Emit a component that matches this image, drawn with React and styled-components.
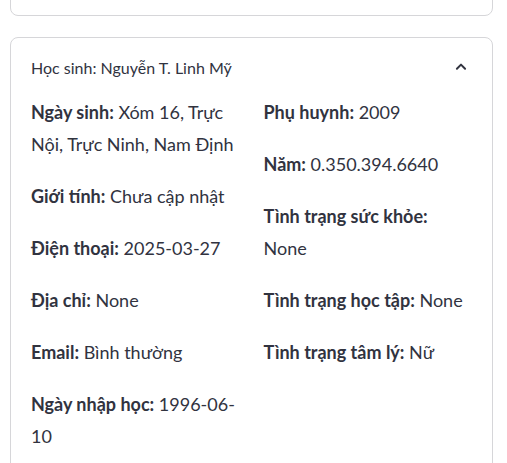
import React from 'react'
import styled, { createGlobalStyle } from 'styled-components'

const GlobalStyle = createGlobalStyle`
    body {
        margin: 0;
        background: #ffffff;
        font-family: "Lato", "Noto Sans", sans-serif;
        color: #31333f;
        overflow: hidden;
    }
`

const Page = styled.div`
    display: flex;
    flex-direction: column;
    gap: 21px;
    padding: 0 14px 0 10px;
    margin-top: -41px;
`

const Card = styled.div`
    border: 1px solid #d6d6d9;
    border-radius: 8px;
    background: #fff;
    flex-shrink: 0;
    height: ${props => props.height || 'auto'};
`

const Header = styled.div`
    height: 58px;
    display: flex;
    align-items: center;
    justify-content: space-between;
    padding: 0 24px 0 20px;
    font-size: 16px;
    color: #31333f;
`

const Body = styled.div`
    padding: 0 20px 20px 20px;
    display: grid;
    grid-template-columns: 1fr 1fr;
    column-gap: 24px;
`

const Column = styled.div`
    display: flex;
    flex-direction: column;
    gap: 20px;
`

const Item = styled.p`
    margin: 0;
    font-size: 18px;
    line-height: 32px;
    b {
        font-weight: 700;
    }
`

const left = [
    ['Ngày sinh', 'Xóm 16, Trực Nội, Trực Ninh, Nam Định'],
    ['Giới tính', 'Chưa cập nhật'],
    ['Điện thoại', '2025-03-27'],
    ['Địa chỉ', 'None'],
    ['Email', 'Bình thường'],
    ['Ngày nhập học', '1996-06-10'],
]

const right = [
    ['Phụ huynh', '2009'],
    ['Năm', '0.350.394.6640'],
    ['Tình trạng sức khỏe', 'None'],
    ['Tình trạng học tập', 'None'],
    ['Tình trạng tâm lý', 'Nữ'],
]

function App() {
    return (
        <>
            <GlobalStyle />
            <Page>
                <Card height="55px" />
                <Card>
                    <Header>
                        <span>Học sinh: Nguyễn T. Linh Mỹ</span>
                        <svg width="14" height="14" viewBox="0 0 24 24" fill="none" stroke="#31333f" strokeWidth="3.4" strokeLinecap="round" strokeLinejoin="round">
                            <polyline points="5 15 12 8 19 15" />
                        </svg>
                    </Header>
                    <Body>
                        <Column>
                            {left.map(([k, v]) => (
                                <Item key={k}><b>{k}:</b> {v}</Item>
                            ))}
                        </Column>
                        <Column>
                            {right.map(([k, v]) => (
                                <Item key={k}><b>{k}:</b> {v}</Item>
                            ))}
                        </Column>
                    </Body>
                </Card>
            </Page>
        </>
    )
}

export default App
